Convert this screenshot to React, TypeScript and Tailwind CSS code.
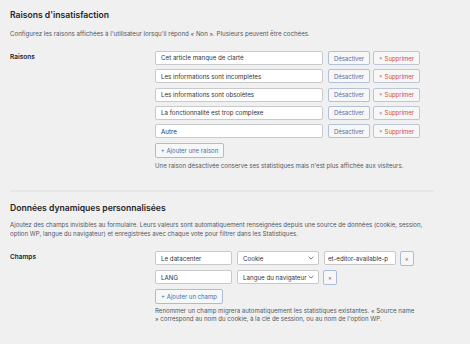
import React from "react";

const reasons = [
  "Cet article manque de clarté",
  "Les informations sont incomplètes",
  "Les informations sont obsolètes",
  "La fonctionnalité est trop complexe",
  "Autre",
];

function Chevron() {
  return (
    <svg width="6" height="4" viewBox="0 0 6 4" className="shrink-0">
      <path d="M0.6 0.8 L3 3.1 L5.4 0.8" fill="none" stroke="#50575e" strokeWidth="0.8" />
    </svg>
  );
}

export default function App() {
  return (
    <div
      className="w-[470px] h-[344px] overflow-hidden bg-[#f0f0f1] text-[#1d2327] pl-[10px]"
      style={{ fontFamily: "Inter, 'Noto Sans', sans-serif" }}
    >
      <h2 className="pt-[10px] text-[8.6px] leading-[11px] font-semibold">Raisons d'insatisfaction</h2>
      <p className="mt-[8px] text-[6.15px] leading-[9px] text-[#50575e]">
        Configurez les raisons affichées à l'utilisateur lorsqu'il répond « Non ». Plusieurs peuvent être cochées.
      </p>
      <div className="mt-[13px] flex">
        <div className="w-[145px] pt-[2px] text-[6.5px] leading-[9px] font-semibold">Raisons</div>
        <div className="flex flex-col">
          <div className="flex flex-col gap-[4.3px]">
            {reasons.map((r) => (
              <div key={r} className="flex items-center h-[14px]">
                <div className="w-[168px] h-[14px] bg-white border border-[#c8c9cb] rounded-[2px] flex items-center px-[5px] text-[6.2px] text-[#2c3338]">
                  {r}
                </div>
                <div className="ml-[5px] w-[42px] h-[14px] border border-[#b3c0d6] rounded-[2px] bg-[#f6f7f7] flex items-center justify-center text-[6px] text-[#4a73ae]">
                  Désactiver
                </div>
                <div className="ml-[3px] w-[47px] h-[14px] border border-[#bcc6d6] rounded-[2px] bg-[#f6f7f7] flex items-center justify-center text-[6px] text-[#d24b4d]">
                  <span className="mr-[2px] text-[5.5px]">×</span>Supprimer
                </div>
              </div>
            ))}
          </div>
          <div className="mt-[5px] w-[69px] h-[15px] border border-[#a9bcd8] rounded-[2px] bg-[#f6f7f7] flex items-center justify-center text-[6px] text-[#3f6fb0]">
            + Ajouter une raison
          </div>
          <p className="mt-[3px] text-[6.1px] leading-[9px] text-[#50575e]">
            Une raison désactivée conserve ses statistiques mais n'est plus affichée aux visiteurs.
          </p>
        </div>
      </div>

      <div className="mt-[20px] w-[424px] h-[1.5px] bg-[#e6e6e7]" />

      <h2 className="mt-[11px] text-[8.6px] leading-[11px] font-semibold">Données dynamiques personnalisées</h2>
      <p className="mt-[6px] w-[425px] text-[6.1px] leading-[9.3px] text-[#50575e]">
        Ajoutez des champs invisibles au formulaire. Leurs valeurs sont automatiquement renseignées depuis une source de données (cookie, session, option WP, langue du navigateur) et enregistrées avec chaque vote pour filtrer dans les Statistiques.
      </p>
      <div className="mt-[13px] flex">
        <div className="w-[145px] pt-[2px] text-[6.5px] leading-[9px] font-semibold">Champs</div>
        <div className="flex flex-col">
          <div className="flex flex-col gap-[5px]">
            <div className="flex items-center h-[14px]">
              <div className="w-[77px] h-[14px] bg-white border border-[#c8c9cb] rounded-[2px] flex items-center px-[5px] text-[6.2px] text-[#2c3338]">
                Le datacenter
              </div>
              <div className="ml-[5px] w-[82px] h-[14px] bg-white border border-[#c8c9cb] rounded-[2px] flex items-center justify-between pl-[5px] pr-[4px] text-[6.2px] text-[#2c3338]">
                <span>Cookie</span>
                <Chevron />
              </div>
              <div className="ml-[5px] w-[72px] h-[14px] bg-white border border-[#c8c9cb] rounded-[2px] flex items-center px-[3px] text-[6.2px] text-[#2c3338] overflow-hidden whitespace-nowrap">
                et-editor-available-p
              </div>
              <div className="ml-[4px] w-[13.5px] h-[15px] border border-[#a9bcd8] rounded-[2px] bg-[#f6f7f7] flex items-center justify-center text-[6px] text-[#d63638]">
                ×
              </div>
            </div>
            <div className="flex items-center h-[14px]">
              <div className="w-[77px] h-[14px] bg-white border border-[#c8c9cb] rounded-[2px] flex items-center px-[5px] text-[6.2px] text-[#2c3338]">
                LANG
              </div>
              <div className="ml-[5px] w-[82px] h-[14px] bg-white border border-[#c8c9cb] rounded-[2px] flex items-center justify-between pl-[5px] pr-[4px] text-[6.2px] text-[#2c3338] whitespace-nowrap">
                <span>Langue du navigateur</span>
                <Chevron />
              </div>
              <div className="ml-[4px] w-[14px] h-[15px] border border-[#a9bcd8] rounded-[2px] bg-[#f6f7f7] flex items-center justify-center text-[6px] text-[#d63638]">
                ×
              </div>
            </div>
          </div>
          <div className="mt-[5px] w-[68px] h-[14.5px] border border-[#a9bcd8] rounded-[2px] bg-[#f6f7f7] flex items-center justify-center text-[6px] text-[#3f6fb0]">
            + Ajouter un champ
          </div>
          <p className="mt-[3px] w-[262px] text-[6.1px] leading-[8.5px] text-[#50575e]">
            Renommer un champ migrera automatiquement les statistiques existantes. « Source name » correspond au nom du cookie, à la clé de session, ou au nom de l'option WP.
          </p>
        </div>
      </div>
    </div>
  );
}
